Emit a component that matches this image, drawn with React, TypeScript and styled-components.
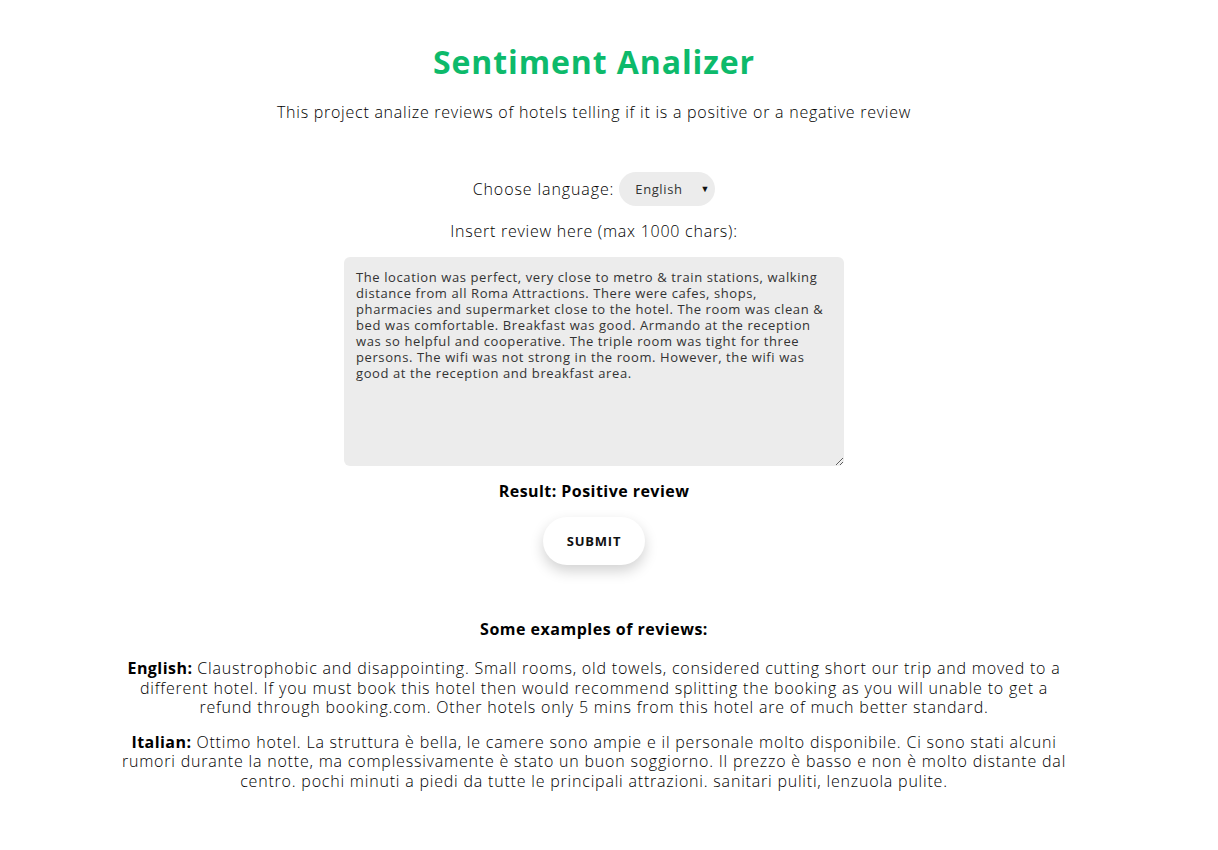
import React, { useState } from "react";
import styled, { createGlobalStyle } from "styled-components";

const FONT = `"Open Sans", "Liberation Sans", Arial, sans-serif`;

const Global = createGlobalStyle`
  html, body { margin: 0; padding: 0; background: #fff; }
  body { font-family: ${FONT}; color: #000; }
  * { box-sizing: border-box; }
`;

const Page = styled.main`
  width: 1188px;
  display: flex;
  flex-direction: column;
  align-items: center;
  text-align: center;
  padding-top: 40px;
`;

const Title = styled.h1`
  margin: 0;
  font-size: 32px;
  line-height: 44px;
  font-weight: 700;
  letter-spacing: 0.9px;
  color: #0dba6b;
`;

const Subtitle = styled.p`
  margin: 18px 0 0;
  font-size: 16px;
  line-height: 20px;
  font-weight: 300;
  letter-spacing: 0.75px;
`;

const Form = styled.form`
  display: flex;
  flex-direction: column;
  align-items: center;
  margin-top: 50px;
`;

const Row = styled.label`
  display: flex;
  align-items: center;
  gap: 5px;
  font-size: 16px;
  font-weight: 300;
  letter-spacing: 0.9px;
`;

const SelectWrap = styled.span`
  position: relative;
  display: inline-flex;
`;

const Select = styled.select`
  appearance: none;
  border: none;
  outline: none;
  background: #ececec;
  border-radius: 17px;
  height: 34px;
  width: 96px;
  padding: 0 24px 0 16px;
  font-family: ${FONT};
  font-size: 13px;
  letter-spacing: 0.6px;
  color: #333;
`;

const Caret = styled.span`
  position: absolute;
  right: 5px;
  top: 50%;
  transform: translateY(-55%);
  font-size: 9px;
  color: #111;
  pointer-events: none;
`;

const Prompt = styled.p`
  margin: 15px 0 0;
  font-size: 16px;
  line-height: 20px;
  font-weight: 300;
  letter-spacing: 0.75px;
`;

const Area = styled.textarea`
  margin-top: 16px;
  width: 500px;
  height: 209px;
  border: none;
  outline: none;
  border-radius: 6px;
  background: #ececec;
  padding: 12px;
  font-family: ${FONT};
  font-size: 13px;
  line-height: 16px;
  letter-spacing: 0.6px;
  color: #333;
  resize: both;
`;

const Result = styled.p`
  margin: 15px 0 0;
  font-size: 16px;
  line-height: 20px;
  font-weight: 700;
  letter-spacing: 0.45px;
`;

const Submit = styled.button`
  margin-top: 16px;
  width: 102px;
  height: 48px;
  border: none;
  border-radius: 24px;
  background: #fff;
  box-shadow: 0 6px 14px rgba(0, 0, 0, 0.18);
  font-family: ${FONT};
  font-size: 13px;
  font-weight: 700;
  letter-spacing: 0.8px;
  color: #111;
  cursor: pointer;
`;

const Examples = styled.section`
  width: 80%;
  margin-top: 54px;
  display: flex;
  flex-direction: column;
  align-items: center;
`;

const ExHeading = styled.h3`
  margin: 0;
  font-size: 16px;
  line-height: 20px;
  font-weight: 700;
  letter-spacing: 0.5px;
`;

const ExText = styled.p`
  margin: 20px 0 0;
  font-size: 16px;
  line-height: 19.5px;
  font-weight: 300;
  letter-spacing: 0.8px;
  & + & { margin-top: 15px; }
  b { font-weight: 700; letter-spacing: 0.45px; }
`;

const REVIEW =
  "The location was perfect, very close to metro & train stations, walking distance from all Roma Attractions. There were cafes, shops, pharmacies and supermarket close to the hotel. The room was clean & bed was comfortable. Breakfast was good. Armando at the reception was so helpful and cooperative. The triple room was tight for three persons. The wifi was not strong in the room. However, the wifi was good at the reception and breakfast area.";

export default function App() {
  const [lang, setLang] = useState("English");
  const [text, setText] = useState(REVIEW);
  return (
    <>
      <Global />
      <Page>
        <Title>Sentiment Analizer</Title>
        <Subtitle>
          This project analize reviews of hotels telling if it is a positive or a negative review
        </Subtitle>
        <Form onSubmit={(e) => e.preventDefault()}>
          <Row>
            Choose language:
            <SelectWrap>
              <Select value={lang} onChange={(e) => setLang(e.target.value)}>
                <option>English</option>
                <option>Italian</option>
              </Select>
              <Caret>▼</Caret>
            </SelectWrap>
          </Row>
          <Prompt>Insert review here (max 1000 chars):</Prompt>
          <Area value={text} maxLength={1000} onChange={(e) => setText(e.target.value)} />
          <Result>Result: Positive review</Result>
          <Submit type="submit">SUBMIT</Submit>
        </Form>
        <Examples>
          <ExHeading>Some examples of reviews:</ExHeading>
          <ExText>
            <b>English:</b> Claustrophobic and disappointing. Small rooms, old towels, considered cutting short our trip and moved to a different hotel. If you must book this hotel then would recommend splitting the booking as you will unable to get a refund through booking.com. Other hotels only 5 mins from this hotel are of much better standard.
          </ExText>
          <ExText>
            <b>Italian:</b> Ottimo hotel. La struttura è bella, le camere sono ampie e il personale molto disponibile. Ci sono stati alcuni rumori durante la notte, ma complessivamente è stato un buon soggiorno. Il prezzo è basso e non è molto distante dal centro. pochi minuti a piedi da tutte le principali attrazioni. sanitari puliti, lenzuola pulite.
          </ExText>
        </Examples>
      </Page>
    </>
  );
}
